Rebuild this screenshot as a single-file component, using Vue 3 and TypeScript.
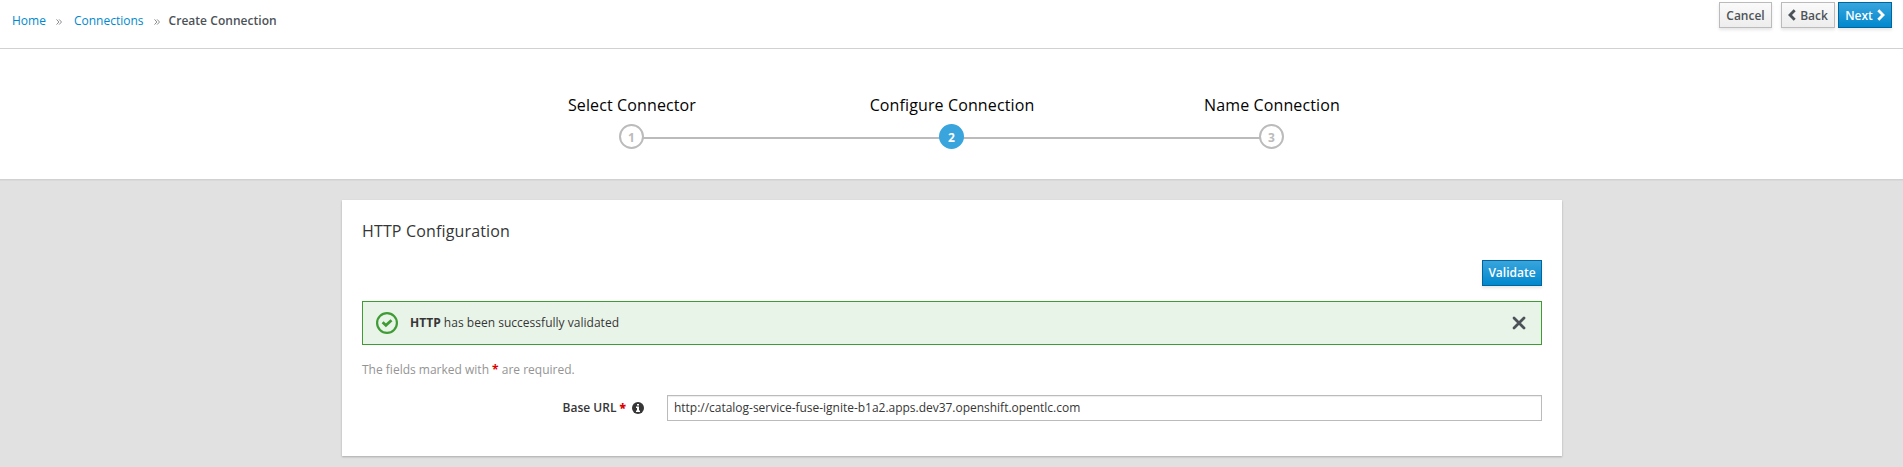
<script setup lang="ts">
import { ref } from 'vue'

interface Step {
  id: number
  title: string
}

const steps: Step[] = [
  { id: 1, title: 'Select Connector' },
  { id: 2, title: 'Configure Connection' },
  { id: 3, title: 'Name Connection' },
]
const activeStep = ref(2)
const baseUrl = ref('http://catalog-service-fuse-ignite-b1a2.apps.dev37.openshift.opentlc.com')
</script>

<template>
  <div class="page">
    <header class="toolbar">
      <nav class="breadcrumb">
        <a class="crumb">Home</a>
        <svg class="sep" viewBox="0 0 6 6"><path d="M.5 .4 2.9 3 .5 5.6M3.1 .4 5.5 3 3.1 5.6" /></svg>
        <a class="crumb">Connections</a>
        <svg class="sep" viewBox="0 0 6 6"><path d="M.5 .4 2.9 3 .5 5.6M3.1 .4 5.5 3 3.1 5.6" /></svg>
        <span class="current">Create Connection</span>
      </nav>
      <div class="actions">
        <button class="btn cancel">Cancel</button>
        <button class="btn back">
          <svg class="chevron" viewBox="0 0 8 12"><path d="M6.7 1.3 2 6l4.7 4.7" /></svg>
          <span>Back</span>
        </button>
        <button class="btn primary next">
          <span>Next</span>
          <svg class="chevron" viewBox="0 0 8 12"><path d="M1.3 1.3 6 6l-4.7 4.7" /></svg>
        </button>
      </div>
    </header>

    <section class="wizard">
      <ol class="steps">
        <li v-for="step in steps" :key="step.id" class="step" :class="{ active: step.id === activeStep }">
          <span class="step-title">{{ step.title }}</span>
          <span class="step-track"><span class="step-number">{{ step.id }}</span></span>
        </li>
      </ol>
    </section>

    <main class="content">
      <div class="card">
        <h2 class="card-title">HTTP Configuration</h2>
        <div class="validate-row"><button class="btn primary validate">Validate</button></div>
        <div class="alert">
          <svg class="ok" viewBox="0 0 22 22">
            <circle cx="11" cy="11" r="9.9" />
            <path d="M6.6 10.300 9.900 13.300 15.500 8.200" />
          </svg>
          <p class="alert-text"><strong>HTTP</strong> has been successfully validated</p>
          <svg class="close" viewBox="0 0 14 14"><path d="M2 2l10 10M12 2 2 12" /></svg>
        </div>
        <p class="hint">The fields marked with <b class="star">*</b> are required.</p>
        <div class="field">
          <label class="label" for="base-url">
            <span>Base URL <b class="star">*</b></span>
            <svg class="info" viewBox="0 0 12 12">
              <circle cx="6" cy="6" r="6" />
              <path d="M5 2h2v1.6H5zM4 4.6h3v3.9h1V10H4V8.500h1V6.100H4z" />
            </svg>
          </label>
          <input id="base-url" v-model="baseUrl" class="input" type="text" />
        </div>
      </div>
    </main>
  </div>
</template>

<style>
body {
  background: #e1e1e1;
}
</style>

<style scoped>
.page {
  height: 467px;
  overflow: hidden;
  background: #e1e1e1;
  color: #363636;
  font: 12px/20px "Open Sans", sans-serif;
}
.page * {
  box-sizing: border-box;
}
.toolbar {
  display: flex;
  justify-content: space-between;
  height: 49px;
  padding: 2px 11px 0 12px;
  background: #fff;
  border-bottom: 1px solid #d1d1d1;
}
.breadcrumb {
  display: flex;
  align-items: center;
  height: 20px;
  margin-top: 9px;
}
.crumb {
  color: #0088ce;
}
.sep {
  width: 6px;
  height: 6px;
  margin: 1px 12px 0 10px;
  fill: none;
  stroke: #8b8d8f;
  stroke-width: 1;
}
.sep:last-of-type {
  margin-right: 9px;
}
.current {
  color: #4d5258;
  font-weight: 600;
  letter-spacing: 0.04px;
}
.actions {
  display: flex;
}
.btn {
  display: flex;
  align-items: center;
  justify-content: center;
  height: 26px;
  padding: 0;
  border: 1px solid #bbb;
  border-radius: 0;
  background: linear-gradient(#fafafa, #ededed);
  box-shadow: 0 2px 3px rgba(3, 3, 3, 0.1);
  color: #4d5258;
  font: 600 12px/20px "Open Sans", sans-serif;
}
.btn.primary {
  border-color: #00659c;
  background: linear-gradient(#39a5dc, #0088ce);
  color: #fff;
}
.cancel {
  width: 53px;
  padding-top: 1px;
  margin-right: 9px;
}
.back,
.next {
  width: 54px;
  padding-top: 1px;
  gap: 4px;
}
.back {
  margin-right: 3px;
}
.chevron {
  width: 8px;
  height: 12px;
  margin-bottom: 1px;
  fill: none;
  stroke: currentColor;
  stroke-width: 2.8;
}
.wizard {
  height: 131px;
  padding-top: 44px;
  background: #fff;
  border-bottom: 1px solid #d1d1d1;
  box-shadow: 0 1px 0 #d9d9d9;
}
.steps {
  display: flex;
  justify-content: center;
  margin: 0;
  padding: 0;
  list-style: none;
}
.step {
  width: 320px;
  text-align: center;
}
.step-title {
  display: block;
  height: 31px;
  padding-left: 1px;
  color: #030303;
  font-size: 16px;
  line-height: 24px;
  letter-spacing: 0.12px;
}
.step-track {
  display: flex;
  justify-content: center;
  height: 25px;
  background: linear-gradient(#bbb, #bbb) 0 13px / 100% 2px no-repeat;
}
.step:first-child .step-track {
  background-position: 160px 13px;
}
.step:last-child .step-track {
  background-size: 160px 2px;
}
.step-number {
  width: 25px;
  height: 25px;
  border: 2px solid #bbb;
  border-radius: 50%;
  background: #fff;
  color: #bbb;
  font-weight: 700;
  line-height: 23px;
}
.active .step-number {
  border-color: #39a5dc;
  background: #39a5dc;
  color: #fff;
}
.content {
  display: flex;
  justify-content: center;
  padding: 20px 0 0 1px;
}
.card {
  width: 1220px;
  height: 256px;
  padding: 20px;
  background: #fff;
  box-shadow: 0 1px 2px rgba(3, 3, 3, 0.25);
}
.card-title {
  height: 40px;
  margin: 0;
  font-size: 16px;
  font-weight: 400;
  line-height: 22px;
  letter-spacing: 0.15px;
}
.validate-row {
  display: flex;
  justify-content: flex-end;
  margin-bottom: 15px;
}
.validate {
  width: 60px;
}
.alert {
  display: flex;
  align-items: center;
  height: 44px;
  padding: 0 15px 0 13px;
  border: 1px solid #3f9c35;
  background: #e9f4e9;
}
.alert-text {
  flex: 1;
  margin: 0 0 0 12px;
  letter-spacing: 0.02px;
}
.ok {
  width: 22px;
  height: 22px;
  fill: none;
  stroke: #3f9c35;
  stroke-width: 2.2;
}
.ok path {
  stroke-width: 2.8;
}
.close {
  width: 14px;
  height: 14px;
  fill: none;
  stroke: #4d5258;
  stroke-width: 2.8;
  stroke-linecap: round;
}
.hint {
  height: 50px;
  margin: 0;
  padding-top: 15px;
  color: #949494;
}
.star {
  color: #d00;
}
.field {
  display: flex;
}
.label {
  display: flex;
  flex: 0 0 305px;
  align-items: center;
  justify-content: flex-end;
  gap: 6px;
  padding-right: 23px;
  font-weight: 600;
}
.info {
  width: 12px;
  height: 12px;
  fill: #363636;
}
.info path {
  fill: #fff;
}
.input {
  flex: 1;
  height: 26px;
  padding: 0 6px 2px;
  border: 1px solid #bbb;
  border-radius: 0;
  outline: 0;
  background: #fff;
  box-shadow: inset 0 1px 1px rgba(3, 3, 3, 0.075);
  color: #363636;
  font: 12px/20px "Open Sans", sans-serif;
  letter-spacing: -0.02px;
}
</style>
